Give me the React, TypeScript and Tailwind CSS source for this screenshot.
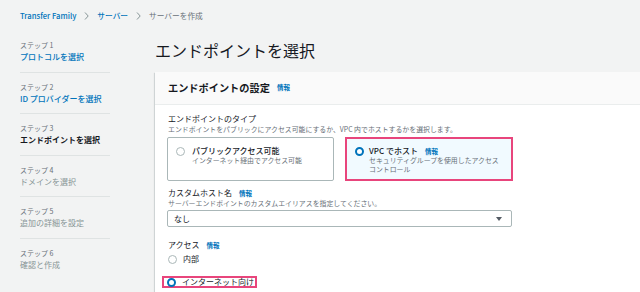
import React from "react";

const font = { fontFamily: '"Noto Sans CJK JP", "Noto Sans", sans-serif' };

function Chevron() {
  return (
    <svg width="5" height="8" viewBox="0 0 5 8" className="mx-[8px]">
      <path d="M1 0.5 L4.2 4 L1 7.5" fill="none" stroke="#879596" strokeWidth="1" />
    </svg>
  );
}

function Info() {
  return <span className="text-[6.5px] font-bold text-[#0073bb] ml-[7px]">情報</span>;
}

function Radio({ checked = false }: { checked?: boolean }) {
  return checked ? (
    <span className="block size-[9px] shrink-0 rounded-full border-[2.5px] border-[#0073bb] bg-white" />
  ) : (
    <span className="block size-[9px] shrink-0 rounded-full border border-[#aab7b8] bg-white" />
  );
}

type Step = { label: string; text: string; state: "done" | "current" | "todo" };

const steps: Array<Step> = [
  { label: "ステップ 1", text: "プロトコルを選択", state: "done" },
  { label: "ステップ 2", text: "ID プロバイダーを選択", state: "done" },
  { label: "ステップ 3", text: "エンドポイントを選択", state: "current" },
  { label: "ステップ 4", text: "ドメインを選択", state: "todo" },
  { label: "ステップ 5", text: "追加の詳細を設定", state: "todo" },
  { label: "ステップ 6", text: "確認と作成", state: "todo" }
];

function StepItem({ step, last }: { step: Step; last: boolean }) {
  const textColor =
    step.state === "done"
      ? "text-[#0073bb] font-medium"
      : step.state === "current"
      ? "text-[#16191f] font-bold"
      : "text-[#879596]";
  return (
    <div className={`pt-[9px] pb-[7.5px] ${last ? "" : "border-b border-[#dfe3e3]"}`}>
      <div className="h-[10px] leading-[10px] text-[7px] text-[#687078]">{step.label}</div>
      <div className={`h-[14px] leading-[14px] text-[8px] whitespace-nowrap ${textColor}`}>{step.text}</div>
    </div>
  );
}

export default function App() {
  return (
    <div style={font} className="w-[640px] h-[292px] overflow-hidden bg-[#f2f3f3] text-[#16191f]">
      <div className="h-[31px] flex items-center pl-[20px] text-[7.7px]">
        <span className="text-[#0073bb] font-medium">Transfer Family</span>
        <Chevron />
        <span className="text-[#0073bb] font-medium">サーバー</span>
        <Chevron />
        <span className="text-[#687078]">サーバーを作成</span>
      </div>
      <div className="flex">
        <div className="w-[90px] ml-[20px] shrink-0">
          {steps.map((s, i) => (
            <StepItem key={s.label} step={s} last={i === steps.length - 1} />
          ))}
        </div>
        <div className="ml-[45px] flex-1">
          <h1 className="mt-[7px] mb-[10px] h-[24px] leading-[24px] text-[16px] font-normal whitespace-nowrap">
            エンドポイントを選択
          </h1>
          <div className="w-[520px] bg-white shadow-[0_1px_1px_0_rgba(0,28,36,0.25),-1px_1px_1px_0_rgba(0,28,36,0.1)]">
            <div className="h-[33px] flex items-center pl-[13px] bg-[#fafafa] border-b border-[#eaeded]">
              <span className="text-[10.2px] font-bold">エンドポイントの設定</span>
              <Info />
            </div>
            <div className="pl-[13px] pt-[8px] pb-[20px]">
              <div className="h-[12px] leading-[12px] text-[8px]">エンドポイントのタイプ</div>
              <div className="h-[9px] leading-[9px] text-[6.9px] text-[#687078] whitespace-nowrap">
                エンドポイントをパブリックにアクセス可能にするか、VPC 内でホストするかを選択します。
              </div>
              <div className="flex gap-[11px] mt-[3px] ml-[-1px]">
                <div className="w-[167px] h-[44px] border border-[#aab7b8] rounded-[2px] bg-white flex pl-[8px] pt-[8px] gap-[7px]">
                  <div className="pt-[1px]">
                    <Radio />
                  </div>
                  <div>
                    <div className="h-[10px] leading-[10px] text-[8px] font-medium">パブリックアクセス可能</div>
                    <div className="h-[9px] leading-[9px] text-[6.9px] text-[#687078]">
                      インターネット経由でアクセス可能
                    </div>
                  </div>
                </div>
                <div className="w-[168px] h-[44px] border-2 border-[#e8457c] bg-[#f1faff] flex pl-[8px] pt-[7px] gap-[5px]">
                  <div className="pt-[1px]">
                    <Radio checked />
                  </div>
                  <div>
                    <div className="h-[10px] leading-[10px] text-[8px] font-medium flex items-center">
                      VPC でホスト
                      <Info />
                    </div>
                    <div className="leading-[9px] text-[6.9px] text-[#687078] whitespace-nowrap">
                      セキュリティグループを使用したアクセス
                      <br />
                      コントロール
                    </div>
                  </div>
                </div>
              </div>
              <div className="mt-[6px] h-[12px] leading-[12px] text-[8px] flex items-center">
                カスタムホスト名
                <Info />
              </div>
              <div className="h-[9px] leading-[9px] text-[6.9px] text-[#687078]">
                サーバーエンドポイントのカスタムエイリアスを指定してください。
              </div>
              <div className="mt-[2px] ml-[-1px] w-[345px] h-[17px] border border-[#aab7b8] rounded-[2px] flex items-center justify-between pl-[6px] pr-[9px]">
                <span className="text-[8px]">なし</span>
                <svg width="6" height="4" viewBox="0 0 6 4">
                  <path d="M0 0 H6 L3 4 Z" fill="#545b64" />
                </svg>
              </div>
              <div className="mt-[12px] h-[12px] leading-[12px] text-[8px] flex items-center">
                アクセス
                <Info />
              </div>
              <div className="mt-[2px] h-[12px] flex items-center gap-[6px]">
                <Radio />
                <span className="text-[8px]">内部</span>
              </div>
              <div className="mt-[11px] ml-[-6px] w-[95px] h-[12px] border-2 border-[#e8457c] flex items-center gap-[6px] pl-[3px]">
                <Radio checked />
                <span className="text-[8px] whitespace-nowrap">インターネット向け</span>
              </div>
            </div>
          </div>
        </div>
      </div>
    </div>
  );
}
